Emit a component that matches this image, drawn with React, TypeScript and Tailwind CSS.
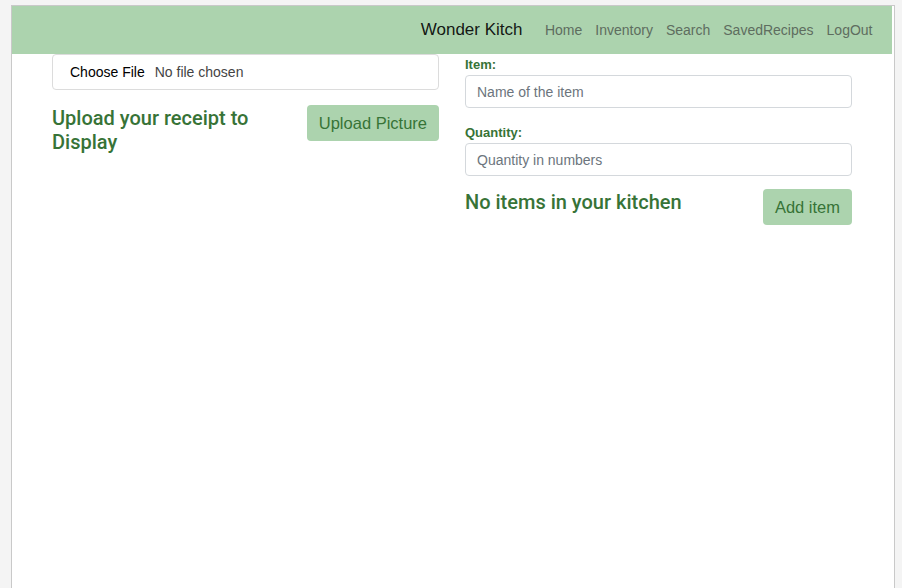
import React from "react";

const links = ["Home", "Inventory", "Search", "SavedRecipes", "LogOut"];

const App = () => {
  return (
    <div
      className="w-full h-screen bg-[#f4f4f4] pt-[5px] pl-[11px] pr-[7px] overflow-hidden"
      style={{ fontFamily: "'Liberation Sans', Arial, sans-serif" }}
    >
      <div className="h-full bg-white border border-b-0 border-[#c9c9c9] pr-[2px]">
        <nav className="h-[48px] bg-[#acd3ae] flex items-center justify-end pr-[13px]">
          <span className="text-[17px] text-black/90 mr-[16px]">Wonder Kitch</span>
          {links.map((l) => (
            <a key={l} className="px-[6.5px] text-[14px] text-[#5e6d5f]">
              {l}
            </a>
          ))}
        </nav>

        <div className="px-10 grid grid-cols-2 gap-[26px]">
          <div>
            <div className="h-[36px] border border-[#dcdcdc] rounded-[4px] flex items-center pl-[17px] text-[14px]">
              <span className="text-black">Choose File</span>
              <span className="ml-[10px] text-[#444]">No file chosen</span>
            </div>
            <div className="flex justify-between items-start mt-[15px]">
              <h2 className="font-[Roboto] text-[20px] leading-[24px] font-medium text-[#377337] mt-[1px] w-[230px]">
                Upload your receipt to Display
              </h2>
              <button className="h-[36px] px-[12px] rounded-[4px] bg-[#acd3ae] text-[#377337] text-[16.5px]">
                Upload Picture
              </button>
            </div>
          </div>

          <div className="pt-[2px]">
            <label className="block text-[13px] font-bold text-[#377337] leading-[18px]">Item:</label>
            <input
              className="mt-[1px] w-full h-[33px] border border-[#d4d8dc] rounded-[4px] px-[11px] text-[14px] placeholder:text-[#6c757d] outline-none"
              placeholder="Name of the item"
            />
            <label className="block mt-[16px] text-[13px] font-bold text-[#377337] leading-[18px]">Quantity:</label>
            <input
              className="mt-[1px] w-full h-[33px] border border-[#d4d8dc] rounded-[4px] px-[11px] text-[14px] placeholder:text-[#6c757d] outline-none"
              placeholder="Quantity in numbers"
            />
            <div className="flex justify-between items-start mt-[13px]">
              <h2 className="font-[Roboto] text-[20px] leading-[24px] font-medium text-[#377337] mt-[1px]">
                No items in your kitchen
              </h2>
              <button className="h-[36px] px-[12px] rounded-[4px] bg-[#acd3ae] text-[#377337] text-[16.5px]">
                Add item
              </button>
            </div>
          </div>
        </div>
      </div>
    </div>
  );
};

export default App;
